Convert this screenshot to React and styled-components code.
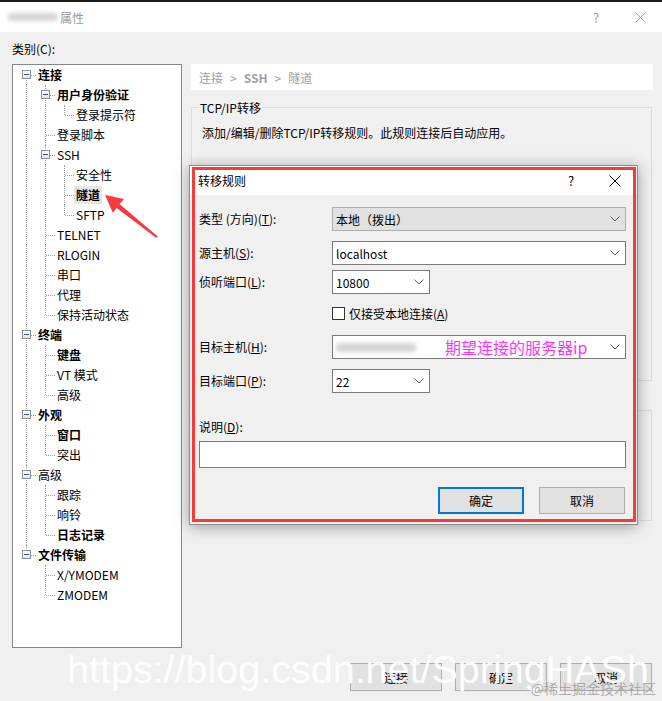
import React from 'react';
import styled, { createGlobalStyle } from 'styled-components';

const GlobalStyle = createGlobalStyle`
  html, body {
    margin: 0;
    padding: 0;
    background: #f0f0f0;
  }
  body {
    font-family: "Noto Sans CJK SC", "Microsoft YaHei", sans-serif;
    font-size: 12px;
    color: #000;
  }
`;

const Window = styled.div`
  position: relative;
  width: 662px;
  height: 701px;
  overflow: hidden;
  background: #f0f0f0;
  display: flex;
  flex-direction: column;
`;

const TopEdge = styled.div`
  height: 2px;
  background: #1b1b1b;
`;

const TitleBar = styled.div`
  height: 30px;
  background: #fff;
  display: flex;
  align-items: center;
  padding-left: 8px;
  color: #9a9a9a;
`;

const Blurred = styled.span`
  display: inline-block;
  width: ${p => p.$w}px;
  height: ${p => p.$h || 8}px;
  background: #d4d4d4;
  filter: blur(2px);
  border-radius: 4px;
  margin-right: ${p => p.$mr || 0}px;
`;

const TitleText = styled.span`
  flex: 1;
`;

const CaptionButton = styled.span`
  width: 44px;
  height: 30px;
  display: flex;
  align-items: center;
  justify-content: center;
  color: ${p => p.$dark ? '#000' : '#9a9a9a'};
  font-size: 13px;
`;

const Body = styled.div`
  flex: 1;
  display: flex;
  flex-direction: column;
  padding: 0 9px 0 12px;
`;

const CategoryLabel = styled.div`
  height: 32px;
  line-height: 34px;
`;

const MainRow = styled.div`
  display: flex;
  gap: 9px;
  height: 584px;
`;

const TreeBox = styled.div`
  width: 170px;
  box-sizing: border-box;
  border: 1px solid #828790;
  background: #fff;
  padding-left: 4px;
`;

const TreeRow = styled.div`
  display: flex;
  height: 20px;
  align-items: center;
`;

const Cell = styled.span`
  position: relative;
  width: 19px;
  height: 20px;
  flex: none;
  &::before {
    content: '';
    position: absolute;
    left: 9px;
    top: ${p => p.$top ? 0 : 10}px;
    bottom: ${p => p.$bottom ? 0 : 10}px;
    border-left: 1px dotted #a0a0a0;
    display: ${p => (p.$top || p.$bottom) ? 'block' : 'none'};
  }
  &::after {
    content: '';
    position: absolute;
    left: 10px;
    right: 0;
    top: 10px;
    border-top: 1px dotted #a0a0a0;
    display: ${p => p.$stub ? 'block' : 'none'};
  }
`;

const Expander = styled.span`
  position: absolute;
  left: 5px;
  top: 5px;
  width: 9px;
  height: 9px;
  box-sizing: border-box;
  border: 1px solid #919191;
  background: linear-gradient(#ffffff, #e2e2e2);
  z-index: 1;
  &::after {
    content: '';
    position: absolute;
    left: 1px;
    top: 3px;
    width: 5px;
    height: 1px;
    background: #2d4f94;
  }
`;

const TreeLabel = styled.span`
  padding: 0 2px;
  line-height: 18px;
  font-weight: ${p => p.$bold ? 700 : 400};
  background: ${p => p.$selected ? '#e5e5e5' : 'transparent'};
  white-space: nowrap;
`;

const RightPanel = styled.div`
  flex: 1;
  display: flex;
  flex-direction: column;
`;

const Breadcrumb = styled.div`
  height: 26px;
  background: #fff;
  padding-left: 8px;
  display: flex;
  align-items: center;
  gap: 7px;
  color: #a0a0a0;
`;

const Crumb = styled.span`
  font-weight: ${p => p.$bold ? 700 : 400};
`;

const Group = styled.fieldset`
  margin: ${p => p.$mt}px 1px 0 0;
  padding: 0 10px;
  height: ${p => p.$h}px;
  box-sizing: border-box;
  border: 1px solid #dcdcdc;
  legend {
    padding: 0 1px;
    margin-left: -3px;
    line-height: 17px;
  }
`;

const GroupText = styled.div`
  margin-top: 8px;
  line-height: 17px;
`;

const ButtonRow = styled.div`
  margin-top: 15px;
  display: flex;
  justify-content: flex-end;
  gap: 13px;
  padding-right: 1px;
`;

const Button = styled.div`
  width: ${p => p.$w || 92}px;
  height: ${p => p.$h || 28}px;
  box-sizing: border-box;
  border: ${p => p.$default ? '2px solid #0078d7' : '1px solid #adadad'};
  background: #e1e1e1;
  display: flex;
  align-items: center;
  justify-content: center;
`;

/* overlay: modal dialog */
const Dialog = styled.div`
  position: absolute;
  left: 189px;
  top: 165px;
  width: 449px;
  height: 360px;
  box-sizing: border-box;
  border: 1px solid #8c8c8c;
  background: #f0f0f0;
  box-shadow: 0 2px 14px rgba(0, 0, 0, 0.35);
  display: flex;
  flex-direction: column;
`;

const RedFrame = styled.div`
  position: absolute;
  left: 2px;
  top: 1px;
  right: 1px;
  bottom: 2px;
  border: 3px solid #f53b3b;
  pointer-events: none;
`;

const DialogTitle = styled.div`
  height: 29px;
  background: #fff;
  display: flex;
  align-items: center;
  padding-left: 8px;
`;

const DialogBody = styled.div`
  padding: 0 11px 0 9px;
  display: flex;
  flex-direction: column;
`;

const FormRow = styled.div`
  display: flex;
  align-items: center;
  margin-top: ${p => p.$mt}px;
`;

const FormLabel = styled.span`
  width: 133px;
  flex: none;
  line-height: 14px;
`;

const U = styled.span`
  text-decoration: underline;
  text-underline-offset: 1px;
`;

const Combo = styled.div`
  width: ${p => p.$w}px;
  height: 24px;
  box-sizing: border-box;
  border: 1px solid ${p => p.$grey ? '#adadad' : '#7a7a7a'};
  background: ${p => p.$grey ? '#e1e1e1' : '#fff'};
  display: flex;
  align-items: center;
  padding-left: 3px;
`;

const ComboValue = styled.span`
  flex: 1;
  display: flex;
  align-items: center;
  white-space: nowrap;
`;

const Chevron = styled.svg`
  width: 10px;
  height: 6px;
  margin-right: 5px;
`;

const Hint = styled.span`
  color: #ff33ff;
  font-size: 16px;
  margin-left: 29px;
`;

const CheckRow = styled.label`
  display: flex;
  align-items: center;
  gap: 4px;
  margin: 13px 0 0 133px;
  height: 13px;
`;

const CheckBox = styled.span`
  width: 13px;
  height: 13px;
  box-sizing: border-box;
  border: 1px solid #333;
  background: #fff;
`;

const TextInput = styled.div`
  margin-top: 7px;
  height: 27px;
  box-sizing: border-box;
  border: 1px solid #7a7a7a;
  background: #fff;
`;

const DialogButtons = styled.div`
  margin-top: 19px;
  display: flex;
  justify-content: flex-end;
  gap: 15px;
  padding-right: 1px;
`;

/* annotations drawn over the screenshot */
const Arrow = styled.svg`
  position: absolute;
  left: 0;
  top: 0;
  width: 662px;
  height: 701px;
  pointer-events: none;
`;

const Watermark = styled.div`
  position: absolute;
  left: 67px;
  top: 646px;
  font-family: "Liberation Sans", Arial, sans-serif;
  font-size: 39.5px;
  line-height: 46px;
  color: rgba(255, 255, 255, 0.92);
  white-space: nowrap;
  pointer-events: none;
`;

const Stamp = styled.div`
  position: absolute;
  right: 6px;
  bottom: 3px;
  font-size: 14px;
  color: rgba(160, 160, 160, 0.85);
  white-space: nowrap;
`;

const tree = [
  { label: '连接', bold: true, children: [
    { label: '用户身份验证', bold: true, children: [{ label: '登录提示符' }] },
    { label: '登录脚本' },
    { label: 'SSH', children: [
      { label: '安全性' },
      { label: '隧道', bold: true, selected: true },
      { label: 'SFTP' },
    ] },
    { label: 'TELNET' },
    { label: 'RLOGIN' },
    { label: '串口' },
    { label: '代理' },
    { label: '保持活动状态' },
  ] },
  { label: '终端', bold: true, children: [
    { label: '键盘', bold: true },
    { label: 'VT 模式' },
    { label: '高级' },
  ] },
  { label: '外观', bold: true, children: [
    { label: '窗口', bold: true },
    { label: '突出' },
  ] },
  { label: '高级', children: [
    { label: '跟踪' },
    { label: '响铃' },
    { label: '日志记录', bold: true },
  ] },
  { label: '文件传输', bold: true, children: [
    { label: 'X/YMODEM' },
    { label: 'ZMODEM' },
  ] },
];

function flatten(nodes, guides = [], out = []) {
  nodes.forEach((node, i) => {
    const last = i === nodes.length - 1;
    out.push({
      ...node,
      guides,
      last,
      first: guides.length === 0 && i === 0,
      open: !!node.children,
    });
    if (node.children) flatten(node.children, [...guides, !last], out);
  });
  return out;
}

const rows = flatten(tree);

const ChevronIcon = () => (
  <Chevron viewBox="0 0 10 6">
    <path d="M0.5 0.5 L5 5 L9.5 0.5" fill="none" stroke="#606060" strokeWidth="1" />
  </Chevron>
);

const CloseIcon = ({ size = 12, color = '#000' }) => (
  <svg width={size} height={size} viewBox="0 0 12 12">
    <path d="M0.5 0.5 L11.5 11.5 M11.5 0.5 L0.5 11.5" stroke={color} strokeWidth="1" />
  </svg>
);

export default function App() {
  return (
    <>
      <GlobalStyle />
      <Window>
        <TopEdge />
        <TitleBar>
          <Blurred $w={50} $mr={2} />
          <TitleText>属性</TitleText>
          <CaptionButton>?</CaptionButton>
          <CaptionButton><CloseIcon size={11} color="#9a9a9a" /></CaptionButton>
        </TitleBar>

        <Body>
          <CategoryLabel>类别(C):</CategoryLabel>
          <MainRow>
            <TreeBox>
              {rows.map((r, idx) => (
                <TreeRow key={idx}>
                  {r.guides.map((g, j) => (
                    <Cell key={j} $top={g} $bottom={g} />
                  ))}
                  <Cell $top={!r.first} $bottom={!r.last} $stub>
                    {r.open && <Expander />}
                  </Cell>
                  <TreeLabel $bold={r.bold} $selected={r.selected}>{r.label}</TreeLabel>
                </TreeRow>
              ))}
            </TreeBox>

            <RightPanel>
              <Breadcrumb>
                <Crumb>连接</Crumb>
                <Crumb>&gt;</Crumb>
                <Crumb $bold>SSH</Crumb>
                <Crumb>&gt;</Crumb>
                <Crumb>隧道</Crumb>
              </Breadcrumb>
              <Group $mt={9} $h={282}>
                <legend>TCP/IP转移</legend>
                <GroupText>添加/编辑/删除TCP/IP转移规则。此规则连接后自动应用。</GroupText>
              </Group>
              <Group $mt={29} $h={111} />
            </RightPanel>
          </MainRow>

          <ButtonRow>
            <Button>连接</Button>
            <Button>确定</Button>
            <Button>取消</Button>
          </ButtonRow>
        </Body>

        <Dialog>
          <DialogTitle>
            <TitleText>转移规则</TitleText>
            <CaptionButton $dark>?</CaptionButton>
            <CaptionButton $dark><CloseIcon size={12} /></CaptionButton>
          </DialogTitle>
          <DialogBody>
            <FormRow $mt={12}>
              <FormLabel>类型 (方向)(<U>T</U>):</FormLabel>
              <Combo $w={294} $grey>
                <ComboValue>本地（拨出）</ComboValue>
                <ChevronIcon />
              </Combo>
            </FormRow>
            <FormRow $mt={10}>
              <FormLabel>源主机(<U>S</U>):</FormLabel>
              <Combo $w={294}>
                <ComboValue>localhost</ComboValue>
                <ChevronIcon />
              </Combo>
            </FormRow>
            <FormRow $mt={5}>
              <FormLabel>侦听端口(<U>L</U>):</FormLabel>
              <Combo $w={98}>
                <ComboValue>10800</ComboValue>
                <ChevronIcon />
              </Combo>
            </FormRow>
            <CheckRow>
              <CheckBox />
              <span>仅接受本地连接(<U>A</U>)</span>
            </CheckRow>
            <FormRow $mt={15}>
              <FormLabel>目标主机(<U>H</U>):</FormLabel>
              <Combo $w={294}>
                <ComboValue>
                  <Blurred $w={80} $h={9} />
                  <Hint>期望连接的服务器ip</Hint>
                </ComboValue>
                <ChevronIcon />
              </Combo>
            </FormRow>
            <FormRow $mt={10}>
              <FormLabel>目标端口(<U>P</U>):</FormLabel>
              <Combo $w={98}>
                <ComboValue>22</ComboValue>
                <ChevronIcon />
              </Combo>
            </FormRow>
            <FormRow $mt={27}>
              <FormLabel>说明(<U>D</U>):</FormLabel>
            </FormRow>
            <TextInput />
            <DialogButtons>
              <Button $w={86} $h={27} $default>确定</Button>
              <Button $w={86} $h={27}>取消</Button>
            </DialogButtons>
          </DialogBody>
          <RedFrame />
        </Dialog>

        <Arrow viewBox="0 0 662 701">
          <polygon
            points="105,195 124,199 119.5,204 157.8,236.4 156.4,238 116.6,208 113,213"
            fill="#f53b3b"
          />
        </Arrow>

        <Watermark>https://blog.csdn.net/SpringHASh</Watermark>
        <Stamp>@稀土掘金技术社区</Stamp>
      </Window>
    </>
  );
}
